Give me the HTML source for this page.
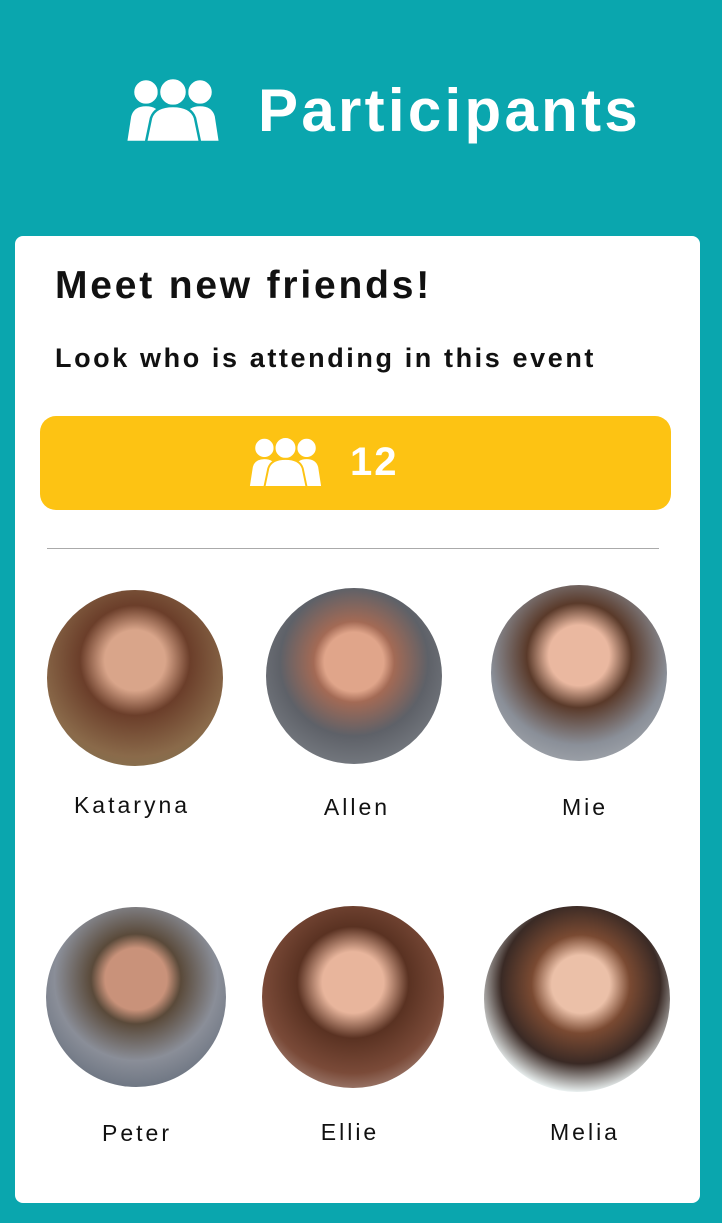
<!DOCTYPE html>
<html><head><meta charset="utf-8"><style>
body{margin:0;width:722px;height:1223px;background:#0aa6ae;font-family:"Liberation Sans",sans-serif;position:relative;overflow:hidden}
.a{position:absolute}
.card{left:15px;top:236px;width:685px;height:967px;background:#fff;border-radius:8px}
.t{font-weight:bold;color:#111}
.av{position:absolute;border-radius:50%}
.n{position:absolute;font-size:23px;color:#111;text-align:center;width:200px;letter-spacing:3px}
</style></head><body>
<svg class="a" style="left:125px;top:78px" width="96" height="64" viewBox="0 0 96 64">
<g fill="#fff" stroke="#0aa6ae" stroke-width="2.5">
<circle cx="21" cy="14" r="13"/><circle cx="75" cy="14" r="13"/>
<path d="M1 64 L5 38 Q8 27 21 27 Q34 27 37 38 L41 64Z"/>
<path d="M55 64 L59 38 Q62 27 75 27 Q88 27 91 38 L95 64Z"/>
<circle cx="48" cy="14" r="14"/>
<path d="M21 64 L26 40 Q30 28 48 28 Q66 28 70 40 L75 64Z"/>
</g></svg>
<div class="a" style="left:258px;top:76px;font-size:60px;font-weight:bold;color:#fff;letter-spacing:3.3px">Participants</div>
<div class="a card"></div>
<div class="a t" style="left:55px;top:264px;font-size:39px;letter-spacing:2.8px">Meet new friends!</div>
<div class="a t" style="left:55px;top:343px;font-size:27px;letter-spacing:2.6px">Look who is attending in this event</div>
<div class="a" style="left:40px;top:416px;width:631px;height:94px;background:#fdc313;border-radius:16px"></div>
<svg class="a" style="left:248px;top:437px" width="75" height="50" viewBox="0 0 96 64">
<g fill="#fff" stroke="#fdc313" stroke-width="2.5">
<circle cx="21" cy="14" r="13"/><circle cx="75" cy="14" r="13"/>
<path d="M1 64 L5 38 Q8 27 21 27 Q34 27 37 38 L41 64Z"/>
<path d="M55 64 L59 38 Q62 27 75 27 Q88 27 91 38 L95 64Z"/>
<circle cx="48" cy="14" r="14"/>
<path d="M21 64 L26 40 Q30 28 48 28 Q66 28 70 40 L75 64Z"/>
</g></svg>
<div class="a" style="left:350px;top:440px;font-size:40px;font-weight:bold;color:#fff;letter-spacing:2px">12</div>
<div class="a" style="left:47px;top:548px;width:612px;height:1px;background:#aaa"></div>
<div class="av" style="left:47px;top:590px;width:176px;height:176px;background:radial-gradient(circle at 50% 40%,#d9a58a 0 22%,#6b3e2a 40%,#8a6a4a 70%,#7d7a55)"></div>
<div class="av" style="left:266px;top:588px;width:176px;height:176px;background:radial-gradient(circle at 50% 42%,#e0a58a 0 22%,#a36a55 30%,#5e6168 55%,#8a8f95)"></div>
<div class="av" style="left:491px;top:585px;width:176px;height:176px;background:radial-gradient(circle at 50% 40%,#eab8a0 0 22%,#5a3a2a 38%,#8a8f98 65%,#b8bcc0)"></div>
<div class="av" style="left:46px;top:907px;width:180px;height:180px;background:radial-gradient(circle at 50% 40%,#c9927a 0 22%,#5a4a3a 32%,#8a8e98 58%,#4e5a6a)"></div>
<div class="av" style="left:262px;top:906px;width:182px;height:182px;background:radial-gradient(circle at 50% 42%,#e8b59c 0 22%,#5a3222 40%,#7a4a38 65%,#d5c8c4)"></div>
<div class="av" style="left:484px;top:906px;width:186px;height:186px;background:radial-gradient(circle at 52% 42%,#ebc0a8 0 20%,#7a4a32 34%,#3a2a25 55%,#eef5f5 75%)"></div>
<div class="n" style="left:32px;top:792px">Kataryna</div>
<div class="n" style="left:257px;top:794px">Allen</div>
<div class="n" style="left:485px;top:794px">Mie</div>
<div class="n" style="left:37px;top:1120px">Peter</div>
<div class="n" style="left:250px;top:1119px">Ellie</div>
<div class="n" style="left:485px;top:1119px">Melia</div>
</body></html>
